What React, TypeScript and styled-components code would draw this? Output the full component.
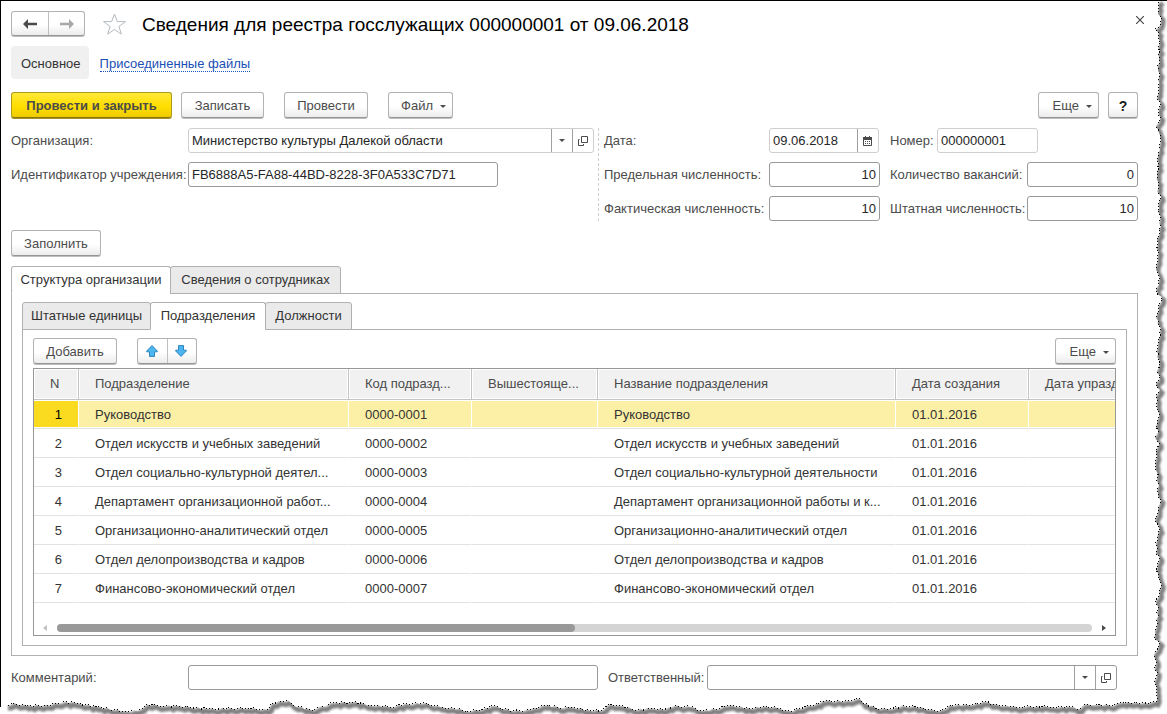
import React, { useState } from "react";
import styled, { createGlobalStyle, css } from "styled-components";

const GlobalStyle = createGlobalStyle`
  *, *::before, *::after { box-sizing: border-box; }
  html, body { margin: 0; background: #fff; }
  body, button, input {
    font-family: "Liberation Sans", Arial, sans-serif;
    font-size: 13px;
    line-height: 16px;
  }
  svg { flex: none; }
`;

const Page = styled.main`
  position: relative;
  min-height: 100vh;
  padding: 10px 29px 24px 11px;
  border-top: 1px solid #000;
  background: #fff;
  color: #4b4b4b;
  overflow: hidden;
`;

const raised = css`
  border: 1px solid #b3b3b3;
  border-bottom-color: #969696;
  border-radius: 3px;
  background: linear-gradient(#fff, #fff 55%, #ececec);
  box-shadow: 0 1px 0 #bdbdbd;
`;

const Row = styled.div<{ $gap?: number; $top?: number }>`
  display: flex;
  align-items: center;
  gap: ${(p) => p.$gap ?? 0}px;
  margin-top: ${(p) => p.$top ?? 0}px;
`;

const TitleRow = styled.header`
  display: flex;
  align-items: center;
  height: 25px;
`;

const Title = styled.h1`
  flex: 1;
  margin: 0 0 0 16px;
  padding-top: 2px;
  color: #000;
  font-size: 19px;
  font-weight: 400;
  line-height: 24px;
  white-space: nowrap;
`;

const ButtonGroup = styled.div`
  ${raised}
  display: flex;
  overflow: hidden;
`;

const GroupButton = styled.button<{ $width: number; $height: number }>`
  display: flex;
  align-items: center;
  justify-content: center;
  width: ${(p) => p.$width}px;
  height: ${(p) => p.$height}px;
  padding: 0;
  border: 0;
  background: none;
  & + & { border-left: 1px solid #c0c0c0; }
`;

const IconButton = styled.button`
  display: flex;
  align-items: center;
  justify-content: center;
  padding: 0;
  border: 0;
  background: none;
`;

const StarButton = styled(IconButton)`
  width: 24px;
  height: 25px;
  margin-left: 17px;
`;

const CloseButton = styled(IconButton)`
  width: 12px;
  height: 12px;
  margin: -8px -8px 0 0;
`;

const SectionNav = styled.nav`
  display: flex;
  align-items: center;
  gap: 11px;
  height: 33px;
  margin-top: 10px;
`;

const CurrentSection = styled.span`
  padding: 10px 8px 7px 10px;
  border-radius: 4px;
  background: #f0f0f0;
  color: #333;
`;

const SectionLink = styled.a`
  margin-top: 3px;
  border-bottom: 1px dotted #1a56c4;
  color: #1a4fb5;
  line-height: 14px;
  text-decoration: none;
`;

const Button = styled.button<{ $width: number; $primary?: boolean; $strong?: boolean }>`
  ${raised}
  display: flex;
  align-items: center;
  justify-content: center;
  gap: 7px;
  width: ${(p) => p.$width}px;
  height: 26px;
  padding: 2px 0 0;
  color: #4b4b4b;
  white-space: nowrap;
  ${(p) =>
    p.$primary &&
    css`
      border-color: #b09a1c;
      border-bottom-color: #857310;
      background: linear-gradient(#ffe939, #ffde00 55%, #efcb00);
      box-shadow: 0 1px 0 #a8922a;
      font-weight: 700;
    `}
  ${(p) =>
    p.$strong &&
    css`
      color: #1c1c1c;
      font-size: 14px;
      font-weight: 700;
    `}
`;

const MenuButton = styled(Button)`
  justify-content: flex-end;
  padding-right: 6px;
`;

const Caret = styled.span`
  width: 0;
  height: 0;
  border: solid transparent;
  border-width: 3px 3px 0;
  border-top-color: #4b4b4b;
`;

const Spacer = styled.div`
  flex: 1;
`;

const Fields = styled.section`
  display: flex;
  margin-top: 10px;
`;

const FieldColumn = styled.div`
  display: flex;
  flex: 1;
  flex-direction: column;
  gap: 9px;
  padding-right: 4px;
`;

const NumberGrid = styled.div`
  display: grid;
  grid-template-columns: 165px 111px 147px 111px;
  align-items: center;
  gap: 9px 0;
  padding-left: 5px;
  border-left: 1px dashed #cfcfcf;
`;

const NumberCell = styled.div`
  display: flex;
  align-items: center;
  grid-column: span 2;
  padding-left: 10px;
`;

const Label = styled.label<{ $width?: number; $indent?: number }>`
  width: ${(p) => (p.$width ? `${p.$width}px` : "auto")};
  padding-left: ${(p) => p.$indent ?? 0}px;
  flex: none;
  white-space: nowrap;
`;

const FieldBox = styled.div<{ $width?: number; $soft?: boolean }>`
  display: flex;
  flex: ${(p) => (p.$width ? "none" : 1)};
  width: ${(p) => (p.$width ? `${p.$width}px` : "auto")};
  height: 25px;
  border: 1px solid ${(p) => (p.$soft ? "#cfcfcf" : "#999")};
  border-radius: 3px;
  background: #fff;
  overflow: hidden;
`;

const Input = styled.input<{ $right?: boolean }>`
  flex: 1;
  min-width: 0;
  padding: 0 3px;
  border: 0;
  outline: 0;
  background: none;
  color: #262626;
  text-align: ${(p) => (p.$right ? "right" : "left")};
`;

const FieldButton = styled(IconButton)`
  width: 21px;
  border-left: 1px solid #a0a0a0;
`;

const TabList = styled.div<{ $top: number }>`
  position: relative;
  z-index: 1;
  display: flex;
  margin: ${(p) => p.$top}px 0 -1px;
`;

const Tab = styled.button<{ $active?: boolean; $width: number }>`
  width: ${(p) => p.$width}px;
  height: 28px;
  padding: 0;
  border: 1px solid #b0b0b0;
  border-bottom-color: ${(p) => (p.$active ? "#fff" : "#b0b0b0")};
  border-radius: 3px 3px 0 0;
  background: ${(p) => (p.$active ? "#fff" : "#eaeaea")};
  color: #333;
  white-space: nowrap;
  & + & { margin-left: -1px; }
`;

const TabPanel = styled.div`
  padding: 8px 10px 9px;
  border: 1px solid #b0b0b0;
`;

const TableFrame = styled.div`
  margin-top: 4px;
  border: 1px solid #979797;
`;

const TableClip = styled.div`
  overflow: hidden;
`;

const Table = styled.table`
  width: 1195px;
  border-collapse: separate;
  border-spacing: 0;
  table-layout: fixed;
`;

const cell = css`
  padding: 0 10px 0 16px;
  overflow: hidden;
  font-weight: 400;
  text-align: left;
  text-overflow: ellipsis;
  white-space: nowrap;
`;

const HeadCell = styled.th`
  ${cell}
  height: 31px;
  border-right: 1px solid #c4c4c4;
  border-bottom: 1px solid #c4c4c4;
  background: #f1f1f1;
  box-shadow: inset 0 0 0 1px #fff;
  color: #4b4b4b;
`;

const Cell = styled.td<{ $number?: boolean; $selected?: boolean }>`
  ${cell}
  height: 29px;
  padding-top: 2px;
  padding-right: ${(p) => (p.$number ? 16 : 10)}px;
  border-right: 1px solid #fff;
  border-bottom: 1px solid #e2e2e2;
  background: ${(p) => (p.$selected ? (p.$number ? "#fbdb20" : "#fcf0a6") : "#fff")};
  box-shadow: inset 0 1px 0 #fff, inset 0 -1px 0 #fff;
  color: ${(p) => (p.$selected && p.$number ? "#000" : "#333")};
  text-align: ${(p) => (p.$number ? "right" : "left")};
`;

const ScrollRow = styled.div`
  display: flex;
  align-items: center;
  height: 32px;
  padding: 18px 9px 0;
  gap: 10px;
`;

const ScrollTrack = styled.div`
  flex: 1;
  height: 8px;
  border-radius: 4px;
  background: #d4d4d4;
`;

const ScrollThumb = styled.div`
  width: 50%;
  height: 8px;
  border-radius: 4px;
  background: #999;
`;

const ScrollArrow = styled.span<{ $right?: boolean }>`
  width: 4px;
  height: 6px;
  background: ${(p) => (p.$right ? "#4b4b4b" : "#c0c0c0")};
  clip-path: ${(p) => (p.$right ? "polygon(0 0, 100% 50%, 0 100%)" : "polygon(100% 0, 0 50%, 100% 100%)")};
`;

const Footer = styled.footer`
  display: flex;
  align-items: center;
  margin-top: 9px;
  padding-right: 21px;
`;

const TornEdgeSvg = styled.svg`
  position: absolute;
  inset: -1px 0 0 0;
  width: 100%;
  height: calc(100% + 1px);
  pointer-events: none;
`;

const OpenIcon = () => (
  <svg width="10" height="10" viewBox="0 0 10 10" fill="none" stroke="#4b4b4b">
    <path d="M3.5 .5h6v6h-6z M1.5 3.5h-1v6h5v-1.5" />
  </svg>
);

const CalendarIcon = () => (
  <svg width="10" height="10" viewBox="0 0 10 10">
    <path d="M0 1h9v3H0z M2 0h1v1H2z M6 0h1v1H6z" fill="#4b4b4b" />
    <path d="M.5 3.5v6h8v-6" fill="none" stroke="#4b4b4b" />
    <path d="M2 5h1v1H2z M4 5h1v1H4z M6 5h1v1H6z M2 7h1v1H2z M4 7h1v1H4z M6 7h1v1H6z" fill="#4b4b4b" />
  </svg>
);

const NavArrow = ({ forward }: { forward?: boolean }) => (
  <svg width="14" height="10" viewBox="0 0 14 10">
    {forward ? (
      <path d="M14 5 9 0v3.7H0v2.6h9V10z" fill="#a8a8a8" />
    ) : (
      <path d="M0 5l5-5v3.7h9v2.6H5V10z" fill="#4b4b4b" />
    )}
  </svg>
);

const MoveArrow = ({ down }: { down?: boolean }) => (
  <svg width="14" height="12" viewBox="0 0 14 12">
    <path
      d={down ? "M6 11.4 11.3 6v-.8H8.5V.6h-5v4.6H.7V6z" : "M6 .6.7 6v.8h2.8v4.6h5V6.8h2.8V6z"}
      fill="#4db5f0"
      stroke="#2e86bd"
    />
  </svg>
);

const RIGHT_TEAR: number[][] = [
  [1161, 0], [1158, 5], [1158, 11], [1161, 20], [1160, 25], [1155, 29], [1159, 33], [1159, 60], [1158, 68],
  [1160, 74], [1158, 80], [1159, 88], [1157, 96], [1160, 102], [1159, 112], [1160, 120], [1156, 127],
  [1160, 135], [1160, 150], [1157, 160], [1159, 168], [1157, 174], [1158, 185], [1157, 191], [1161, 198],
  [1158, 205], [1160, 220], [1160, 233], [1157, 240], [1158, 255], [1156, 267], [1159, 276], [1159, 285],
  [1156, 290], [1162, 299], [1158, 305], [1159, 310], [1156, 318], [1161, 329], [1158, 345], [1157, 357],
  [1160, 363], [1157, 370], [1160, 377], [1156, 384], [1160, 390], [1156, 397], [1157, 407], [1159, 417],
  [1156, 427], [1158, 433], [1155, 438], [1159, 443], [1156, 450], [1156, 466], [1158, 483], [1158, 495],
  [1161, 500], [1158, 510], [1155, 520], [1160, 530], [1157, 537], [1156, 554], [1160, 558], [1156, 570],
  [1159, 578], [1161, 587], [1156, 603], [1158, 610], [1157, 625], [1154, 637], [1160, 643], [1154, 654],
  [1156, 660], [1155, 667], [1157, 675], [1155, 683], [1157, 693], [1156, 702],
];

const BOTTOM_TEAR: number[][] = [
  [1142, 703], [1130, 703], [1122, 702], [1114, 705], [1097, 705], [1085, 704], [1080, 709], [1070, 707],
  [1050, 707], [1037, 706], [1024, 707], [1010, 707], [994, 704], [985, 702], [970, 705], [949, 705],
  [944, 709], [935, 711], [920, 707], [904, 706], [890, 709], [880, 709], [864, 704], [860, 699], [844, 701],
  [824, 701], [814, 705], [804, 707], [790, 711], [777, 708], [763, 706], [750, 709], [730, 705], [720, 708],
  [703, 711], [690, 707], [673, 706], [663, 710], [653, 708], [637, 710], [620, 706], [610, 704], [602, 710],
  [590, 711], [573, 707], [563, 708], [543, 705], [530, 710], [513, 711], [493, 706], [480, 710], [467, 711],
  [453, 708], [440, 707], [423, 703], [407, 704], [390, 707], [370, 705], [353, 702], [333, 703], [317, 708],
  [310, 710], [293, 705], [288, 700], [272, 703], [267, 710], [247, 708], [207, 709], [180, 706], [163, 706],
  [147, 704], [137, 711], [123, 711], [97, 707], [77, 703], [63, 702], [47, 705], [27, 706], [13, 703], [6, 705],
];

/* Breaks each stretch into short steps that swing to either side, like torn paper. */
const roughen = (points: number[][]) => {
  const out: number[][] = [];
  points.slice(0, -1).forEach(([x, y], i) => {
    const [nx, ny] = points[i + 1];
    const steps = Math.max(1, Math.round(Math.hypot(nx - x, ny - y) / 3));
    for (let s = 0; s < steps; s += 1) {
      const swing = s === 0 ? 0 : [1, -1, 0, 1, 0, -1][(i * 5 + s) % 6];
      const t = s / steps;
      const vertical = Math.abs(ny - y) > Math.abs(nx - x);
      out.push([x + (nx - x) * t + (vertical ? swing : 0), y + (ny - y) * t + (vertical ? 0 : swing)]);
    }
  });
  out.push(points[points.length - 1]);
  return out;
};

const tear = roughen([...RIGHT_TEAR, ...BOTTOM_TEAR])
  .map(([x, y]) => `${x.toFixed(1)},${y.toFixed(1)}`)
  .join(" ");

const TornEdge = () => (
  <TornEdgeSvg viewBox="0 0 1167 714" preserveAspectRatio="none" aria-hidden="true">
    <defs>
      <filter id="tear-shadow" x="-5%" y="-5%" width="110%" height="110%">
        <feGaussianBlur stdDeviation="1" />
      </filter>
    </defs>
    <path d="M1159 0H1167V20H1161Z" fill="#fff" />
    <polyline
      points={tear}
      transform="translate(2 3)"
      fill="none"
      stroke="#808080"
      strokeWidth="5"
      filter="url(#tear-shadow)"
    />
    <polygon points={`1149,1 ${tear} 6,694 1149,694`} fill="#fff" />
    <polyline points={tear} fill="none" stroke="#000" strokeDasharray="1 2" shapeRendering="crispEdges" />
    <path d="M.5 0V707" stroke="#000" />
  </TornEdgeSvg>
);

const COLUMNS = [
  { title: "N", width: 45 },
  { title: "Подразделение", width: 270 },
  { title: "Код подразд...", width: 123 },
  { title: "Вышестояще...", width: 126 },
  { title: "Название подразделения", width: 298 },
  { title: "Дата создания", width: 133 },
  { title: "Дата упразднения", width: 200 },
];

const DEPARTMENTS = [
  { name: "Руководство" },
  { name: "Отдел искусств и учебных заведений" },
  { name: "Отдел социально-культурной деятельности", short: "Отдел социально-культурной деятел..." },
  { name: "Департамент организационной работы и к...", short: "Департамент организационной работ..." },
  { name: "Организационно-аналитический отдел" },
  { name: "Отдел делопроизводства и кадров" },
  { name: "Финансово-экономический отдел" },
];

export default function App() {
  const [selected, setSelected] = useState(0);

  return (
    <>
      <GlobalStyle />
      <Page>
        <TornEdge />
        <TitleRow>
          <ButtonGroup>
            <GroupButton $width={36} $height={23} aria-label="Назад">
              <NavArrow />
            </GroupButton>
            <GroupButton $width={36} $height={23} aria-label="Вперед">
              <NavArrow forward />
            </GroupButton>
          </ButtonGroup>
          <StarButton aria-label="В избранное">
            <svg width="24" height="22" viewBox="0 0 24 22" fill="none" stroke="#b4bac0">
              <path d="M12.5 1l2.8 7.6h8.2l-6.6 4.9 2.4 7.6-6.8-4.6-6.8 4.6 2.4-7.6-6.6-4.9h8.2z" />
            </svg>
          </StarButton>
          <Title>Сведения для реестра госслужащих 000000001 от 09.06.2018</Title>
          <CloseButton aria-label="Закрыть">
            <svg width="8" height="8" viewBox="0 0 8 8" stroke="#4b4b4b" strokeWidth="1.2">
              <path d="M0 0l8 8M8 0L0 8" />
            </svg>
          </CloseButton>
        </TitleRow>

        <SectionNav>
          <CurrentSection>Основное</CurrentSection>
          <SectionLink href="#files">Присоединенные файлы</SectionLink>
        </SectionNav>

        <Row $top={13} $gap={20}>
          <Row $gap={9}>
            <Button $width={161} $primary>Провести и закрыть</Button>
            <Button $width={83}>Записать</Button>
          </Row>
          <Button $width={84}>Провести</Button>
          <MenuButton $width={65}>
            Файл <Caret />
          </MenuButton>
          <Spacer />
          <Row $gap={9}>
            <MenuButton $width={61}>
              Еще <Caret />
            </MenuButton>
            <Button $width={30} $strong aria-label="Справка">?</Button>
          </Row>
        </Row>

        <Fields>
          <FieldColumn>
            <Row>
              <Label htmlFor="org" $width={177}>Организация:</Label>
              <FieldBox $soft>
                <Input id="org" defaultValue="Министерство культуры Далекой области" />
                <FieldButton aria-label="Выбрать организацию"><Caret /></FieldButton>
                <FieldButton aria-label="Открыть организацию"><OpenIcon /></FieldButton>
              </FieldBox>
            </Row>
            <Row>
              <Label htmlFor="uid" $width={177}>Идентификатор учреждения:</Label>
              <FieldBox $width={310}>
                <Input id="uid" defaultValue="FB6888A5-FA88-44BD-8228-3F0A533C7D71" />
              </FieldBox>
            </Row>
          </FieldColumn>
          <NumberGrid>
            <Label htmlFor="date">Дата:</Label>
            <FieldBox $width={110} $soft>
              <Input id="date" defaultValue="09.06.2018" />
              <FieldButton aria-label="Календарь"><CalendarIcon /></FieldButton>
            </FieldBox>
            <NumberCell>
              <Label htmlFor="number" $width={47}>Номер:</Label>
              <FieldBox $width={101} $soft>
                <Input id="number" defaultValue="000000001" />
              </FieldBox>
            </NumberCell>
            <Label htmlFor="limit">Предельная численность:</Label>
            <FieldBox $width={111}>
              <Input id="limit" $right defaultValue="10" />
            </FieldBox>
            <Label htmlFor="vacancies" $indent={10}>Количество вакансий:</Label>
            <FieldBox $width={111}>
              <Input id="vacancies" $right defaultValue="0" />
            </FieldBox>
            <Label htmlFor="actual">Фактическая численность:</Label>
            <FieldBox $width={111}>
              <Input id="actual" $right defaultValue="10" />
            </FieldBox>
            <Label htmlFor="staff" $indent={10}>Штатная численность:</Label>
            <FieldBox $width={111}>
              <Input id="staff" $right defaultValue="10" />
            </FieldBox>
          </NumberGrid>
        </Fields>

        <Row $top={9}>
          <Button $width={90}>Заполнить</Button>
        </Row>

        <TabList role="tablist" $top={10}>
          <Tab role="tab" aria-selected $active $width={160}>Структура организации</Tab>
          <Tab role="tab" $width={171}>Сведения о сотрудниках</Tab>
        </TabList>
        <TabPanel role="tabpanel">
          <TabList role="tablist" $top={0}>
            <Tab role="tab" $width={129}>Штатные единицы</Tab>
            <Tab role="tab" aria-selected $active $width={116}>Подразделения</Tab>
            <Tab role="tab" $width={87}>Должности</Tab>
          </TabList>
          <TabPanel role="tabpanel">
            <Row $gap={20}>
              <Button $width={84}>Добавить</Button>
              <ButtonGroup>
                <GroupButton $width={29} $height={24} aria-label="Переместить вверх">
                  <MoveArrow />
                </GroupButton>
                <GroupButton $width={29} $height={24} aria-label="Переместить вниз">
                  <MoveArrow down />
                </GroupButton>
              </ButtonGroup>
              <Spacer />
              <MenuButton $width={61}>
                Еще <Caret />
              </MenuButton>
            </Row>
            <TableFrame>
              <TableClip>
                <Table>
                  <colgroup>
                    {COLUMNS.map((c) => (
                      <col key={c.title} style={{ width: c.width }} />
                    ))}
                  </colgroup>
                  <thead>
                    <tr>
                      {COLUMNS.map((c) => (
                        <HeadCell key={c.title}>{c.title}</HeadCell>
                      ))}
                    </tr>
                  </thead>
                  <tbody>
                    {DEPARTMENTS.map(({ name, short }, i) => {
                      const on = i === selected;
                      return (
                        <tr key={name} onClick={() => setSelected(i)}>
                          <Cell $number $selected={on}>{i + 1}</Cell>
                          <Cell $selected={on}>{short ?? name}</Cell>
                          <Cell $selected={on}>{`0000-000${i + 1}`}</Cell>
                          <Cell $selected={on} />
                          <Cell $selected={on}>{name}</Cell>
                          <Cell $selected={on}>01.01.2016</Cell>
                          <Cell $selected={on} />
                        </tr>
                      );
                    })}
                  </tbody>
                </Table>
              </TableClip>
              <ScrollRow>
                <ScrollArrow />
                <ScrollTrack>
                  <ScrollThumb />
                </ScrollTrack>
                <ScrollArrow $right />
              </ScrollRow>
            </TableFrame>
          </TabPanel>
        </TabPanel>

        <Footer>
          <Label htmlFor="comment" $width={177}>Комментарий:</Label>
          <FieldBox>
            <Input id="comment" />
          </FieldBox>
          <Label htmlFor="responsible" $width={109} $indent={10}>Ответственный:</Label>
          <FieldBox>
            <Input id="responsible" />
            <FieldButton aria-label="Выбрать ответственного"><Caret /></FieldButton>
            <FieldButton aria-label="Открыть ответственного"><OpenIcon /></FieldButton>
          </FieldBox>
        </Footer>
      </Page>
    </>
  );
}
